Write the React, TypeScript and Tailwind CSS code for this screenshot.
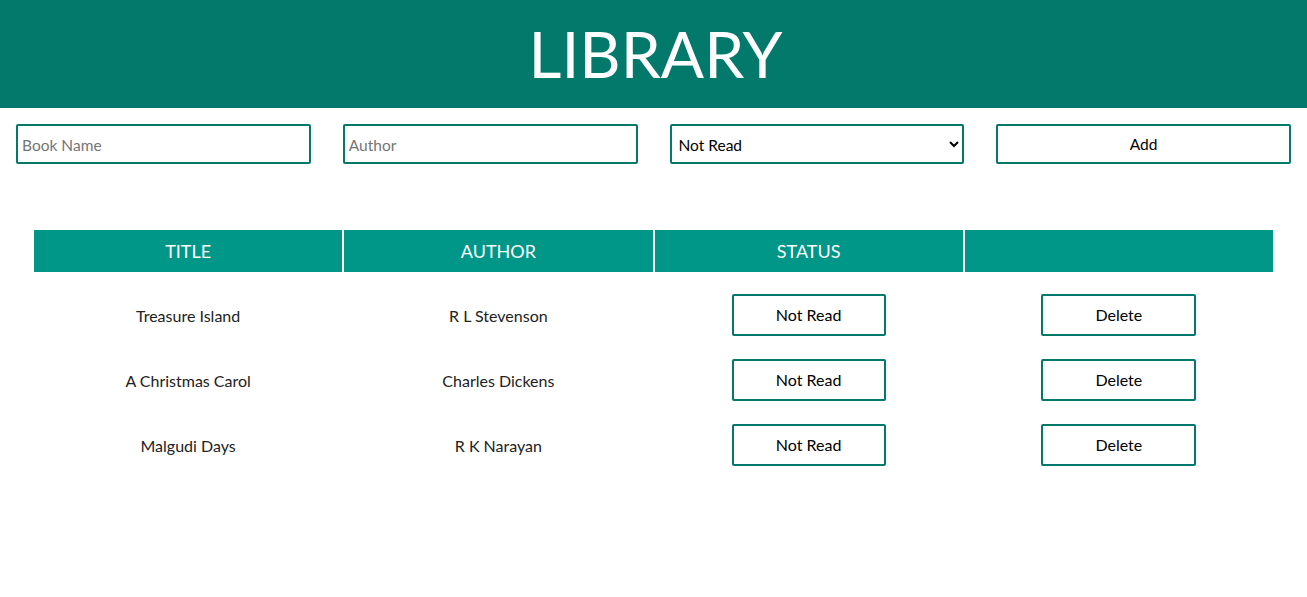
import React from 'react';

const books = [
    { title: 'Treasure Island', author: 'R L Stevenson', status: 'Not Read' },
    { title: 'A Christmas Carol', author: 'Charles Dickens', status: 'Not Read' },
    { title: 'Malgudi Days', author: 'R K Narayan', status: 'Not Read' },
];

export default function App() {
    return (
        <div className="min-h-screen bg-white font-['Lato','Liberation_Sans',sans-serif]">
            {/* Header */}
            <header className="h-[108px] bg-[#02796b] flex items-center justify-center">
                <h1 className="text-white text-[64px] leading-none pl-1">LIBRARY</h1>
            </header>

            {/* Form */}
            <div className="grid grid-cols-4 gap-8 px-4 pt-4">
                <input
                    placeholder="Book Name"
                    className="h-10 border-2 border-[#02796b] rounded-[2px] px-1 pt-px text-[15.5px] text-gray-900 placeholder:text-[#757575] outline-none"
                />
                <input
                    placeholder="Author"
                    className="h-10 border-2 border-[#02796b] rounded-[2px] px-1 pt-px text-[15.5px] text-gray-900 placeholder:text-[#757575] outline-none"
                />
                <select className="h-10 border-2 border-[#02796b] rounded-[2px] px-[3px] pt-px text-[15.5px] text-black outline-none bg-white">
                    <option>Not Read</option>
                    <option>Read</option>
                </select>
                <button className="h-10 border-2 border-[#02796b] rounded-[2px] pt-px text-[15.5px] text-black bg-white">
                    Add
                </button>
            </div>

            {/* Table */}
            <table className="w-[1243px] mx-auto mt-16 table-fixed border-separate border-spacing-[2px] text-center">
                <thead>
                    <tr className="bg-[#009688] text-white text-[18px]">
                        <th className="h-[42px] font-normal w-1/4">TITLE</th>
                        <th className="h-[42px] font-normal w-1/4">AUTHOR</th>
                        <th className="h-[42px] font-normal w-1/4">STATUS</th>
                        <th className="h-[42px] font-normal w-1/4"></th>
                    </tr>
                </thead>
                <tbody className="text-[16px] text-[#222]">
                    <tr>
                        <td colSpan={4} className="h-[6px] p-0" />
                    </tr>
                    {books.map((b) => (
                        <tr key={b.title}>
                            <td className="h-[63px] pt-[4px]">{b.title}</td>
                            <td className="h-[63px] pt-[4px]">{b.author}</td>
                            <td className="h-[63px] pt-[2px]">
                                <button className="w-[154px] h-[42px] border-2 border-[#02796b] rounded-[2px] text-black bg-white">
                                    {b.status}
                                </button>
                            </td>
                            <td className="h-[63px] pt-[2px]">
                                <button className="w-[155px] h-[42px] border-2 border-[#02796b] rounded-[2px] text-black bg-white">
                                    Delete
                                </button>
                            </td>
                        </tr>
                    ))}
                </tbody>
            </table>
        </div>
    );
}
